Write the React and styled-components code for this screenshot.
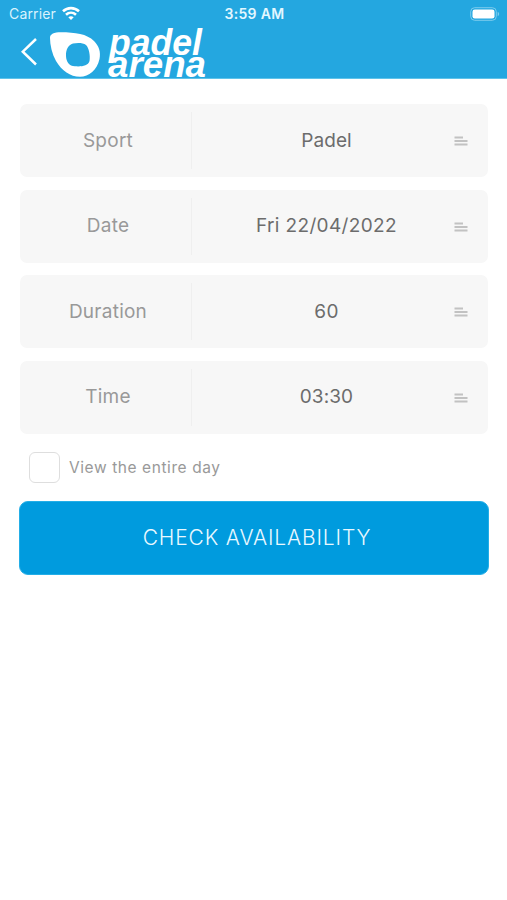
import { useState } from "react";
import React from "react";
import styled, { createGlobalStyle } from "styled-components";

export const Palette = {
  header: "#24a7e0",
  button: "#009bde",
  card: "#f7f7f7",
  line: "#efefef",
  label: "#999999",
  value: "#6c6c6c",
};

const GlobalStyle = createGlobalStyle`
  * {
    box-sizing: border-box;
  }
  body {
    margin: 0;
    background: white;
    font-family: Inter, "Liberation Sans", sans-serif;
  }
`;

const Screen = styled.div`
  min-height: 900px;
  background: white;
`;

const StyledHeader = styled.header`
  height: 79px;
  background-color: ${Palette.header};
  border-bottom: 1px solid #5fc3ea;
  color: white;
`;

const StatusBar = styled.div`
  display: grid;
  grid-template-columns: 1fr auto 1fr;
  align-items: center;
  height: 27px;
  padding: 0 7px 0 9px;
  svg {
    display: block;
  }
`;

const Carrier = styled.div`
  display: flex;
  align-items: center;
  gap: 6px;
  font-size: 14px;
  letter-spacing: 0.15px;
  color: #d9f3fd;
`;

const Clock = styled.div`
  font-size: 14px;
  font-weight: 600;
  letter-spacing: 0.35px;
  color: #e3f7ff;
`;

const Battery = styled.svg`
  justify-self: end;
`;

const NavBar = styled.div`
  display: flex;
  height: 51px;
  padding-left: 20px;
  svg {
    display: block;
    overflow: visible;
  }
`;

const BackButton = styled.button`
  width: 28px;
  height: 51px;
  padding: 0;
  border: 0;
  background: none;
`;

const LogoText = styled.text`
  font-family: "Liberation Sans", sans-serif;
  font-size: 37px;
  font-weight: 700;
  font-style: italic;
  fill: white;
`;

const Form = styled.main`
  display: flex;
  flex-direction: column;
  padding: 25px 19px 0 20px;
`;

const Fields = styled.div`
  display: flex;
  flex-direction: column;
  gap: 12.5px;
`;

const Row = styled.div`
  display: flex;
  align-items: center;
  height: 73px;
  border-radius: 7px;
  background-color: ${Palette.card};
  font-size: 19px;
`;

const Label = styled.div`
  display: flex;
  align-items: center;
  justify-content: center;
  width: 172px;
  height: 57px;
  padding: 0 0 1px 5px;
  border-right: 1px solid ${Palette.line};
  color: ${Palette.label};
  letter-spacing: 0.25px;
`;

const Value = styled.div`
  flex: 1;
  padding: 0 0 1px 7px;
  text-align: center;
  color: ${Palette.value};
  letter-spacing: ${(props) => props.$spacing}px;
`;

const Lines = styled.svg`
  margin: 1px 20px 0 0;
`;

const CheckLabel = styled.label`
  display: flex;
  align-items: center;
  gap: 9px;
  height: 31px;
  margin: 18px 0 0 9px;
  color: ${Palette.label};
  font-size: 15.5px;
  letter-spacing: 0.58px;
`;

const CheckBox = styled.input`
  appearance: none;
  width: 31px;
  height: 31px;
  margin: 0;
  border: 1px solid #dedede;
  border-radius: 6px;
  background: ${(props) => (props.checked ? Palette.button : "white")};
`;

const SubmitButton = styled.button`
  height: 74px;
  margin: 18px -1px 0;
  padding: 0 0 0 6px;
  border: 1px solid #23aee7;
  border-radius: 9px;
  background-color: ${Palette.button};
  color: #e8f8ff;
  font-family: inherit;
  font-size: 21px;
  font-weight: 300;
  letter-spacing: 0.85px;
`;

const fields = [
  { label: "Sport", value: "Padel", spacing: 0.1 },
  { label: "Date", value: "Fri 22/04/2022", spacing: 0.36 },
  { label: "Duration", value: "60", spacing: 0.3 },
  { label: "Time", value: "03:30", spacing: 0.1 },
];

function Logo() {
  return (
    <svg width='162' height='51' viewBox='48 27 162 51'>
      <path
        fill='white'
        fillRule='evenodd'
        d='M50 38C50 34 54 32.300 61 32.300C75 32.300 87 34 94 41C99 46 101 52 99.500 59C97 70 89 76.700 80 76.700C70 76.700 62 71 56 61C52 54 50 45 50 38ZM73 43.500C68 45 65.800 50 66 56C66.300 62 69 66 75 66.300C82 66.700 88 66 89.500 61C90.500 56 89 48 86 45C83 42.500 77 42.600 73 43.500Z'
      />
      <LogoText x='109' y='54.500' textLength='93' lengthAdjust='spacingAndGlyphs'>
        padel
      </LogoText>
      <LogoText x='108' y='76.500' textLength='98' lengthAdjust='spacingAndGlyphs'>
        arena
      </LogoText>
    </svg>
  );
}

export function Header() {
  return (
    <StyledHeader>
      <StatusBar>
        <Carrier>
          Carrier
          <svg width='18' height='15' viewBox='0 0 18 15' fill='none' stroke='white' strokeWidth='2.600'>
            <path d='M1 5.300C5.600 1 12.400 1 17 5.300' />
            <path d='M4 8.700C6.900 6 11.100 6 14 8.700' />
            <path d='M6.300 11.200C8 9.900 10 9.900 11.700 11.200L9 13.900Z' fill='white' stroke='none' />
          </svg>
        </Carrier>
        <Clock>3:59 AM</Clock>
        <Battery width='30' height='14' viewBox='0 0 30 14'>
          <rect x='0.700' y='0.700' width='25.600' height='12.600' rx='4' fill='none' stroke='#7dcced' />
          <rect x='2.500' y='2.500' width='22' height='9' rx='2.300' fill='white' />
          <path d='M27.700 4.700C29.700 5.700 29.700 8.300 27.700 9.300Z' fill='#7dcced' />
        </Battery>
      </StatusBar>
      <NavBar>
        <BackButton aria-label='Back'>
          <svg width='28' height='51' viewBox='20 27 28 51' fill='none' stroke='white'>
            <path d='M36 39L22.800 51.700L36 64.500' strokeWidth='2.500' />
          </svg>
        </BackButton>
        <Logo />
      </NavBar>
    </StyledHeader>
  );
}

function Field({ field }) {
  return (
    <Row>
      <Label>
        <span>{field.label}</span>
      </Label>
      <Value $spacing={field.spacing}>
        <span>{field.value}</span>
      </Value>
      <Lines width='14' height='10' viewBox='0 0 14 10' stroke='#c2c2c2' strokeWidth='1.900'>
        <path d='M0.500 1.500H9M0.500 5H13.500M0.500 8.500H13.500' />
      </Lines>
    </Row>
  );
}

export default function App() {
  const [entireDay, setEntireDay] = useState(false);
  return (
    <Screen>
      <GlobalStyle />
      <Header />
      <Form>
        <Fields>
          {fields.map((field) => (
            <Field key={field.label} field={field} />
          ))}
        </Fields>
        <CheckLabel>
          <CheckBox type='checkbox' checked={entireDay} onChange={() => setEntireDay(!entireDay)} />
          <span>View the entire day</span>
        </CheckLabel>
        <SubmitButton>CHECK AVAILABILITY</SubmitButton>
      </Form>
    </Screen>
  );
}
